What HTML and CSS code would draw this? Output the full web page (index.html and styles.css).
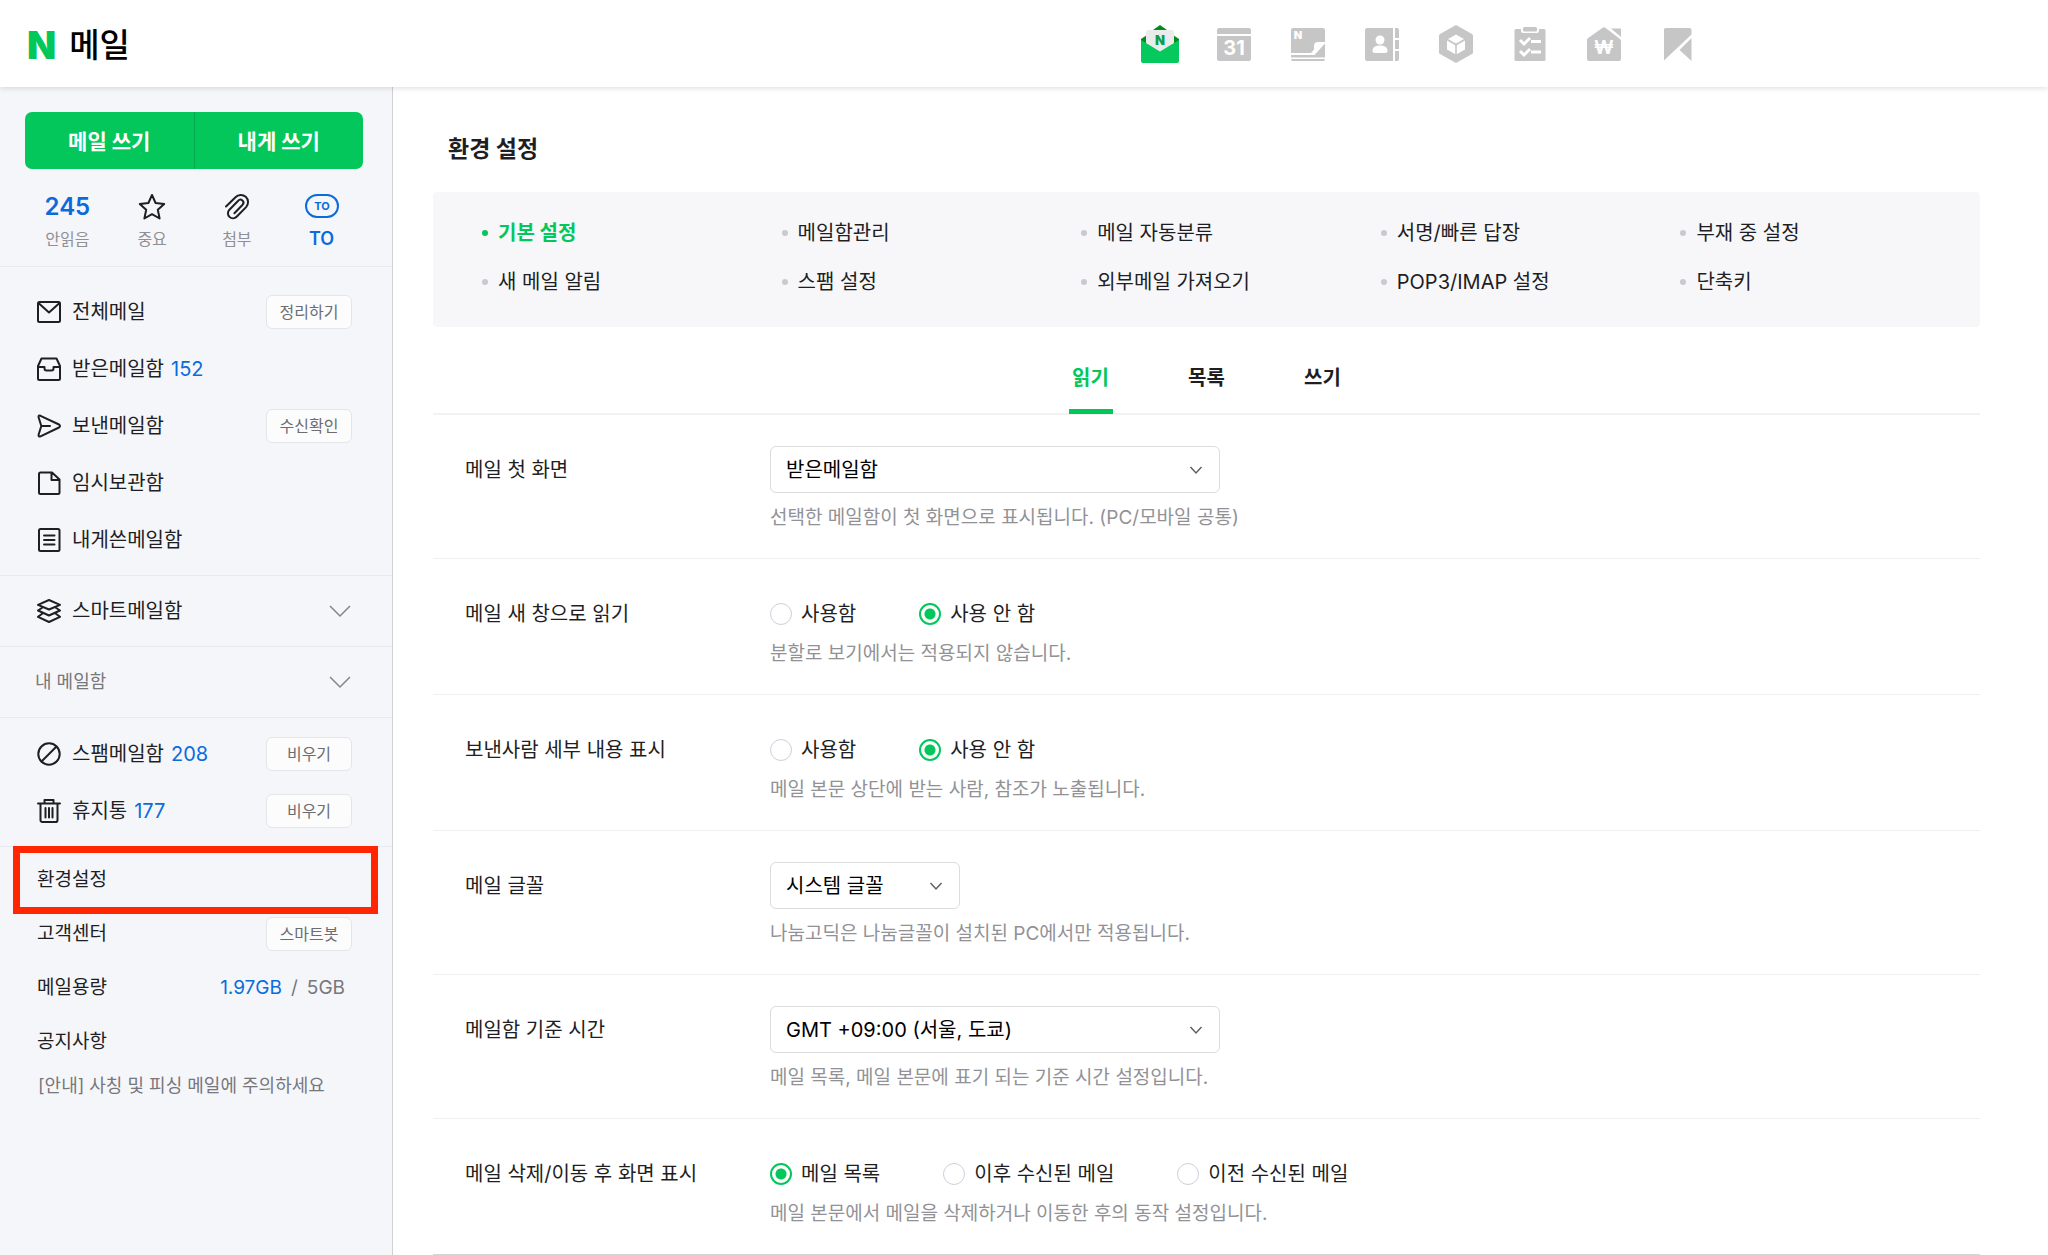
FILE: index.html
```html
<!DOCTYPE html>
<html lang="ko">
<head>
    <meta charset="UTF-8">
    <meta name="viewport" content="width=device-width, initial-scale=1.0">
    <title>메일 환경 설정</title>
    <link rel="stylesheet" href="styles.css">
</head>
<body>
    <header class="header">
        <a href="#" class="logo"><span class="logo-mark">N</span><span class="logo-name">메일</span></a>
        <nav class="service-nav" aria-label="서비스">
            <a href="#" aria-label="메일">
                <svg viewBox="0 0 38 38">
                    <path fill="#048a1d" d="M19 0l7 5v6H12V5zM0 14l6-4v12H0zM38 14l-6-4v12h6z"/>
                    <path fill="#e9ecea" d="M7 5h24a2 2 0 0 1 2 2v20H5V7a2 2 0 0 1 2-2z"/>
                    <path fill="#05c95c" d="M0 15l19 11.500 19-11.500v21a2 2 0 0 1-2 2H2a2 2 0 0 1-2-2z"/>
                    <text x="19" y="20" class="svg-n" font-size="13" fill="#0a9f4b">N</text>
                </svg>
            </a>
            <a href="#" aria-label="캘린더">
                <svg viewBox="0 0 38 38">
                    <path d="M4 3h30a2 2 0 0 1 2 2v4H2V5a2 2 0 0 1 2-2zM2 11h34v23a2 2 0 0 1-2 2H4a2 2 0 0 1-2-2z"/>
                    <text x="19" y="30" class="svg-date">31</text>
                </svg>
            </a>
            <a href="#" aria-label="메모">
                <svg viewBox="0 0 38 38">
                    <path d="M4 3h30a2 2 0 0 1 2 2v12h-7a4 4 0 0 0-4 4v3.500L22 28H2V5a2 2 0 0 1 2-2zM36 18.500L25.500 30H2v2.500h34zM2 34h34a2 2 0 0 1-2 2H4a2 2 0 0 1-2-2z"/>
                    <text x="9" y="14" class="svg-n" font-size="11" fill="#fff">N</text>
                </svg>
            </a>
            <a href="#" aria-label="주소록">
                <svg viewBox="0 0 38 38">
                    <path d="M4 3h26v33H4a2 2 0 0 1-2-2V5a2 2 0 0 1 2-2zM32 3h2a2 2 0 0 1 2 2v8h-4zM32 15h4v9h-4zM32 26h4v8a2 2 0 0 1-2 2h-2z"/>
                    <circle cx="17" cy="15" r="4.500" fill="#fff"/>
                    <path fill="#fff" d="M9.500 26c0-4 3-5.500 7.500-5.500s7.500 1.500 7.500 5.500q0 2-2 2h-11q-2 0-2-2z"/>
                </svg>
            </a>
            <a href="#" aria-label="마이박스">
                <svg viewBox="0 0 38 38">
                    <path d="M19 0l16 9q1 .6 1 1.500v17q0 1-1 1.500l-16 9-16-9q-1-.5-1-1.500v-17q0-1 1-1.500z"/>
                    <path fill="#fff" d="M19 9.500l8 4.500-8 4.500-8-4.500zM10 15.500l8.200 4.700v9L10 24.500zM28 15.500l-8.200 4.700v9L28 24.500z"/>
                </svg>
            </a>
            <a href="#" aria-label="할 일">
                <svg viewBox="0 0 38 38">
                    <path d="M5 4h5v2a2 2 0 0 0 2 2h14a2 2 0 0 0 2-2V4h5a1.500 1.500 0 0 1 1.500 1.500v29A1.500 1.500 0 0 1 33 36H5a1.500 1.500 0 0 1-1.500-1.500v-29A1.500 1.500 0 0 1 5 4z"/>
                    <rect x="12" y="2" width="14" height="4.500" rx="1.500"/>
                    <path fill="none" stroke="#fff" stroke-width="3" d="M9 15l4 4 6-6M9 26l4 4 6-6M20 16.500h10M20 27h10"/>
                </svg>
            </a>
            <a href="#" aria-label="부동산">
                <svg viewBox="0 0 38 38">
                    <path d="M2.500 13.500L18 2.500q1-.7 2 0l15 11.500q1 .8 1 2V34a2 2 0 0 1-2 2H4a2 2 0 0 1-2-2V15q0-1 .5-1.500zM26 3.500h9a1 1 0 0 1 1 1V12z"/>
                    <text x="19" y="29" class="svg-won">₩</text>
                </svg>
            </a>
            <a href="#" aria-label="북마크">
                <svg viewBox="0 0 38 38">
                    <path d="M6.500 3h24a2 2 0 0 1 2 2v4.500L5 35.500V4.500A1.500 1.500 0 0 1 6.500 3zM32.500 13v23L20.500 25z"/>
                </svg>
            </a>
        </nav>
    </header>

    <div class="container">
        <aside class="sidebar">
            <div class="write-buttons">
                <button type="button">메일 쓰기</button>
                <button type="button">내게 쓰기</button>
            </div>
            <div class="quick-menu">
                <a href="#"><strong class="quick-count">245</strong><span>안읽음</span></a>
                <a href="#">
                    <svg width="28" height="28" viewBox="0 0 28 28" class="line-icon"><path d="M14 2l3.600 8 8.600 1-6.400 5.800L21.600 25.500 14 21.200l-7.600 4.300 1.800-8.700L1.800 11l8.600-1z"/></svg>
                    <span>중요</span>
                </a>
                <a href="#">
                    <svg width="28" height="28" viewBox="0 0 28 28" class="line-icon"><path d="M3 13.500L12.500 4.200a7.200 7.200 0 0 1 10.600 9.900l-9.500 9.700a5 5 0 0 1-7.200-7.100l8.800-9a2.900 2.900 0 0 1 4.400 4l-8.200 8.500"/></svg>
                    <span>첨부</span>
                </a>
                <a href="#" class="quick-to">
                    <svg width="36" height="28" viewBox="0 0 36 28"><rect x="2" y="2" width="32" height="22" rx="11"/><text x="18" y="17">TO</text></svg>
                    <span>TO</span>
                </a>
            </div>

            <ul class="mailbox-list">
                <li>
                    <a href="#"><svg width="24" height="24" viewBox="0 0 24 24" class="line-icon"><rect x="1" y="2" width="22" height="20" rx="1.500"/><path d="M2 3.500l10 9 10-9"/></svg>전체메일</a>
                    <button type="button" class="mini-button">정리하기</button>
                </li>
                <li>
                    <a href="#"><svg width="24" height="24" viewBox="0 0 24 24" class="line-icon"><path d="M4.500 1.500h15L23 9v12.500a1.500 1.500 0 0 1-1.500 1.500h-19A1.500 1.500 0 0 1 1 21.500V9zM1 10h6.500v1.500q0 2 2 2h5q2 0 2-2V10H23"/></svg>받은메일함 <em>152</em></a>
                </li>
                <li>
                    <a href="#"><svg width="24" height="24" viewBox="0 0 24 24" class="line-icon"><path d="M1.500 3q0-2 2-1.200L22 10.500q2 1.500 0 3L3.500 22.300q-2 .7-2-1.300l2.800-9zM4.500 12h8.500"/></svg>보낸메일함</a>
                    <button type="button" class="mini-button">수신확인</button>
                </li>
                <li>
                    <a href="#"><svg width="24" height="24" viewBox="0 0 24 24" class="line-icon"><path d="M3.500 1.500H15l7.500 7v13A1.500 1.500 0 0 1 21 23H3.500A1.500 1.500 0 0 1 2 21.500V3a1.500 1.500 0 0 1 1.500-1.500zM14.500 2v7h7.500"/></svg>임시보관함</a>
                </li>
                <li>
                    <a href="#"><svg width="24" height="24" viewBox="0 0 24 24" class="line-icon"><rect x="2" y="1" width="20.500" height="22" rx="1.500"/><path d="M7 7.500h10.500M7 12h10.500M7 16.500h10.500"/></svg>내게쓴메일함</a>
                </li>
            </ul>

            <button type="button" class="folder-toggle">
                <svg width="24" height="24" viewBox="0 0 24 24" class="line-icon"><path d="M12 1l11 4.800-11 4.700L1 5.800zM5.500 8.500L1 11.500l11 5 11-5-4.500-3M5.500 14.500L1 17.800 12 23l11-5.200-4.500-3.300"/></svg>
                <span>스마트메일함</span>
                <svg width="22" height="14" viewBox="0 0 22 14" class="chevron"><path d="M1 2l10 10L21 2"/></svg>
            </button>
            <button type="button" class="folder-toggle my-folder">
                <span>내 메일함</span>
                <svg width="22" height="14" viewBox="0 0 22 14" class="chevron"><path d="M1 2l10 10L21 2"/></svg>
            </button>

            <ul class="mailbox-list trash-list">
                <li>
                    <a href="#"><svg width="24" height="24" viewBox="0 0 24 24" class="line-icon"><circle cx="12" cy="12" r="10.700"/><path d="M4.500 19.500l15-15"/></svg>스팸메일함 <em>208</em></a>
                    <button type="button" class="mini-button">비우기</button>
                </li>
                <li>
                    <a href="#"><svg width="24" height="24" viewBox="0 0 24 24" class="line-icon"><path d="M1 4.500h22M7.500 4V1h9v3M3.500 4.500V21A1.800 1.800 0 0 0 5.300 23h13.400a1.800 1.800 0 0 0 1.800-1.800V4.500M8.500 9v9.500M12 9v9.500M15.500 9v9.500"/></svg>휴지통 <em>177</em></a>
                    <button type="button" class="mini-button">비우기</button>
                </li>
            </ul>

            <ul class="sidebar-footer">
                <li class="highlight"><a href="#">환경설정</a></li>
                <li><a href="#">고객센터</a><button type="button" class="mini-button">스마트봇</button></li>
                <li><span>메일용량</span><span class="capacity"><em>1.97GB</em><span>/</span><span>5GB</span></span></li>
                <li><a href="#">공지사항</a></li>
            </ul>
            <a href="#" class="notice">[안내] 사칭 및 피싱 메일에 주의하세요</a>
        </aside>

        <main class="content">
            <h1>환경 설정</h1>
            <ul class="setting-menu">
                <li class="active"><a href="#">기본 설정</a></li>
                <li><a href="#">메일함관리</a></li>
                <li><a href="#">메일 자동분류</a></li>
                <li><a href="#">서명/빠른 답장</a></li>
                <li><a href="#">부재 중 설정</a></li>
                <li><a href="#">새 메일 알림</a></li>
                <li><a href="#">스팸 설정</a></li>
                <li><a href="#">외부메일 가져오기</a></li>
                <li><a href="#">POP3/IMAP 설정</a></li>
                <li><a href="#">단축키</a></li>
            </ul>

            <div class="tabs" role="tablist">
                <button type="button" role="tab" aria-selected="true" class="active">읽기</button>
                <button type="button" role="tab" aria-selected="false">목록</button>
                <button type="button" role="tab" aria-selected="false">쓰기</button>
            </div>

            <form class="settings">
                <div class="setting-row">
                    <label class="setting-title" for="firstPage">메일 첫 화면</label>
                    <div class="setting-body">
                        <select id="firstPage"><option>받은메일함</option></select>
                        <p>선택한 메일함이 첫 화면으로 표시됩니다. (PC/모바일 공통)</p>
                    </div>
                </div>
                <div class="setting-row" role="radiogroup" aria-labelledby="newWindow">
                    <span class="setting-title" id="newWindow">메일 새 창으로 읽기</span>
                    <div class="setting-body">
                        <div class="radios">
                            <label><input type="radio" name="newWindow">사용함</label>
                            <label><input type="radio" name="newWindow" checked>사용 안 함</label>
                        </div>
                        <p>분할로 보기에서는 적용되지 않습니다.</p>
                    </div>
                </div>
                <div class="setting-row" role="radiogroup" aria-labelledby="senderDetail">
                    <span class="setting-title" id="senderDetail">보낸사람 세부 내용 표시</span>
                    <div class="setting-body">
                        <div class="radios">
                            <label><input type="radio" name="senderDetail">사용함</label>
                            <label><input type="radio" name="senderDetail" checked>사용 안 함</label>
                        </div>
                        <p>메일 본문 상단에 받는 사람, 참조가 노출됩니다.</p>
                    </div>
                </div>
                <div class="setting-row">
                    <label class="setting-title" for="mailFont">메일 글꼴</label>
                    <div class="setting-body">
                        <select id="mailFont" class="small"><option>시스템 글꼴</option></select>
                        <p>나눔고딕은 나눔글꼴이 설치된 PC에서만 적용됩니다.</p>
                    </div>
                </div>
                <div class="setting-row">
                    <label class="setting-title" for="timezone">메일함 기준 시간</label>
                    <div class="setting-body">
                        <select id="timezone"><option>GMT +09:00 (서울, 도쿄)</option></select>
                        <p>메일 목록, 메일 본문에 표기 되는 기준 시간 설정입니다.</p>
                    </div>
                </div>
                <div class="setting-row" role="radiogroup" aria-labelledby="afterMove">
                    <span class="setting-title" id="afterMove">메일 삭제/이동 후 화면 표시</span>
                    <div class="setting-body">
                        <div class="radios">
                            <label><input type="radio" name="afterMove" checked>메일 목록</label>
                            <label><input type="radio" name="afterMove">이후 수신된 메일</label>
                            <label><input type="radio" name="afterMove">이전 수신된 메일</label>
                        </div>
                        <p>메일 본문에서 메일을 삭제하거나 이동한 후의 동작 설정입니다.</p>
                    </div>
                </div>
            </form>
        </main>
    </div>
</body>
</html>
```
FILE: styles.css
```css
* { margin: 0; padding: 0; box-sizing: border-box; }

body {
    font-family: Inter, "Noto Sans CJK KR", sans-serif;
    font-size: 20px;
    line-height: 24px;
    color: #1e1e23;
    background: #fff;
    min-height: 100vh;
    display: flex;
    flex-direction: column;
}

a { color: inherit; text-decoration: none; }
ul { list-style: none; }
em { font-style: normal; color: #0a6cdc; }

button, select, input {
    font: inherit;
    color: inherit;
}

button {
    border: none;
    background: none;
    cursor: pointer;
}

/* header */
.header {
    position: relative;
    z-index: 2;
    display: flex;
    align-items: center;
    justify-content: space-between;
    height: 87px;
    padding: 0 351px 0 27px;
    background: #fff;
    box-shadow: 0 1px 6px rgba(0, 0, 0, 0.14);
}

.logo {
    display: flex;
    align-items: center;
    gap: 13px;
    padding-top: 2px;
    line-height: 40px;
}

.logo-mark {
    font-size: 38px;
    font-weight: 900;
    color: #03c75a;
}

.logo-name {
    font-size: 33px;
    font-weight: 500;
    color: #000;
}

.service-nav {
    display: flex;
    gap: 36px;
}

.service-nav a {
    display: flex;
}

.service-nav svg {
    width: 38px;
    height: 38px;
    fill: #c6c6c6;
}

.service-nav text {
    font-family: Inter, sans-serif;
    font-weight: 700;
    text-anchor: middle;
}

.service-nav .svg-n { font-weight: 900; }
.svg-date { font-size: 20px; fill: #fff; }
.svg-won { font-size: 19px; fill: #fff; }

/* sidebar */
.container {
    display: flex;
    flex: 1;
}

.sidebar {
    flex: none;
    width: 393px;
    padding-top: 25px;
    background: #f5f6fa;
    border-right: 1px solid #cfd0d4;
}

.write-buttons {
    display: flex;
    height: 57px;
    margin: 0 29px 0 25px;
    border-radius: 7px;
    background: #03c75a;
    overflow: hidden;
}

.write-buttons button {
    flex: 1;
    padding-top: 2px;
    font-size: 21px;
    font-weight: 700;
    color: #fff;
}

.write-buttons button + button {
    border-left: 1px solid #04a94d;
}

.quick-menu {
    display: flex;
    padding: 24px 28px 15px 25px;
    border-bottom: 1px solid #e8eaef;
}

.quick-menu a {
    flex: 1;
    display: flex;
    flex-direction: column;
    align-items: center;
    gap: 6px;
    font-size: 16px;
    color: #8f8f94;
}

.quick-menu .quick-count {
    font-size: 24px;
    font-weight: 600;
    line-height: 28px;
    color: #0a6cdc;
}

.quick-menu .quick-to {
    font-size: 18px;
    font-weight: 600;
    color: #0a6cdc;
}

.quick-to rect {
    fill: none;
    stroke: #0a6cdc;
    stroke-width: 2;
}

.quick-to text {
    font-size: 11px;
    font-weight: 700;
    fill: #0a6cdc;
    text-anchor: middle;
}

.line-icon {
    flex: none;
    fill: none;
    stroke: #1e1e23;
    stroke-width: 2;
    stroke-linejoin: round;
    stroke-linecap: round;
}

.mailbox-list {
    padding: 16px 40px 7px 37px;
    border-bottom: 1px solid #e8eaef;
}

.trash-list {
    padding-top: 7px;
}

.mailbox-list li {
    display: flex;
    align-items: center;
    justify-content: space-between;
    height: 57px;
}

.mailbox-list a {
    display: flex;
    align-items: center;
}

.mailbox-list .line-icon {
    margin-right: 11px;
}

.mailbox-list em {
    margin-left: 7px;
}

.mini-button {
    width: 86px;
    height: 34px;
    border: 1px solid #e4e5ea;
    border-radius: 6px;
    background: #fcfcfd;
    font-size: 16px;
    color: #6c6c71;
}

.folder-toggle {
    display: flex;
    align-items: center;
    gap: 11px;
    width: 100%;
    height: 71px;
    padding: 0 41px 0 37px;
    border-bottom: 1px solid #e8eaef;
}

.my-folder {
    padding-left: 35px;
    font-size: 18px;
    color: #77777c;
}

.chevron {
    margin-left: auto;
    fill: none;
    stroke: #85858a;
    stroke-width: 1.500;
}

.sidebar-footer {
    padding: 6px 0 0;
    font-size: 19px;
}

.sidebar-footer li {
    position: relative;
    display: flex;
    align-items: center;
    justify-content: space-between;
    height: 54px;
    padding: 0 40px 0 37px;
}

.highlight::after {
    content: "";
    position: absolute;
    top: -7px;
    bottom: -7px;
    left: 13px;
    right: 14px;
    border: 7px solid #ff2600;
}

.capacity {
    display: flex;
    gap: 9px;
    padding-right: 7px;
    color: #77777c;
}

.notice {
    display: block;
    padding: 5px 0 24px 38px;
    font-size: 18px;
    color: #77777c;
}

/* content */
.content {
    flex: 1;
    min-width: 0;
    padding: 50px 68px 0 40px;
}

h1 {
    padding: 0 15px 31px;
    font-size: 23px;
    font-weight: 700;
    line-height: 24px;
}

.setting-menu {
    display: grid;
    grid-template-columns: repeat(5, 1fr);
    padding: 16px 0 21px 49px;
    background: #f7f7fa;
    border-radius: 4px;
}

.setting-menu li {
    display: flex;
    align-items: center;
    gap: 10px;
    height: 49px;
}

.setting-menu li::before {
    content: "";
    width: 6px;
    height: 6px;
    border-radius: 50%;
    background: #c9c9ce;
}

.setting-menu .active {
    font-weight: 700;
    color: #03c75a;
}

.setting-menu .active::before {
    background: #03c75a;
}

.tabs {
    display: flex;
    justify-content: center;
    gap: 72px;
    border-bottom: 2px solid #f2f2f3;
}

.tabs button {
    width: 44px;
    height: 87px;
    margin-bottom: -1px;
    padding-top: 20px;
    border-bottom: 5px solid transparent;
    font-weight: 700;
}

.tabs .active {
    color: #03c75a;
    border-color: #03c75a;
}

.settings {
    border-bottom: 2px solid #d5d5d8;
}

.setting-row {
    display: flex;
    padding: 31px 0 28px 32px;
}

.setting-row + .setting-row {
    border-top: 1px solid #f0f0f2;
}

.setting-title {
    flex: none;
    width: 305px;
    line-height: 48px;
}

.setting-body p {
    margin-top: 13px;
    font-size: 19px;
    color: #929296;
}

.setting-body .radios + p {
    margin-top: 5px;
}

select {
    display: block;
    appearance: none;
    width: 450px;
    height: 47px;
    padding: 0 44px 0 15px;
    border: 1px solid #dcdce0;
    border-radius: 6px;
    background: #fff url("data:image/svg+xml,%3Csvg xmlns='http://www.w3.org/2000/svg' width='14' height='10' viewBox='0 0 14 10'%3E%3Cpath fill='none' stroke='%23606065' stroke-width='1.500' d='M1.500 2L7 8l5.500-6'/%3E%3C/svg%3E") no-repeat right 16px center;
    color: #000;
}

select.small {
    width: 190px;
}

.radios {
    display: flex;
    align-items: center;
    gap: 63px;
    height: 47px;
}

.radios label {
    display: flex;
    align-items: center;
    gap: 9px;
}

.radios input {
    appearance: none;
    width: 22px;
    height: 22px;
    border: 1px solid #cfcfdc;
    border-radius: 50%;
    background: #fff;
}

.radios input:checked {
    border: 2px solid #03c75a;
    background: radial-gradient(circle, #03c75a 5px, #fff 6px);
}
```
